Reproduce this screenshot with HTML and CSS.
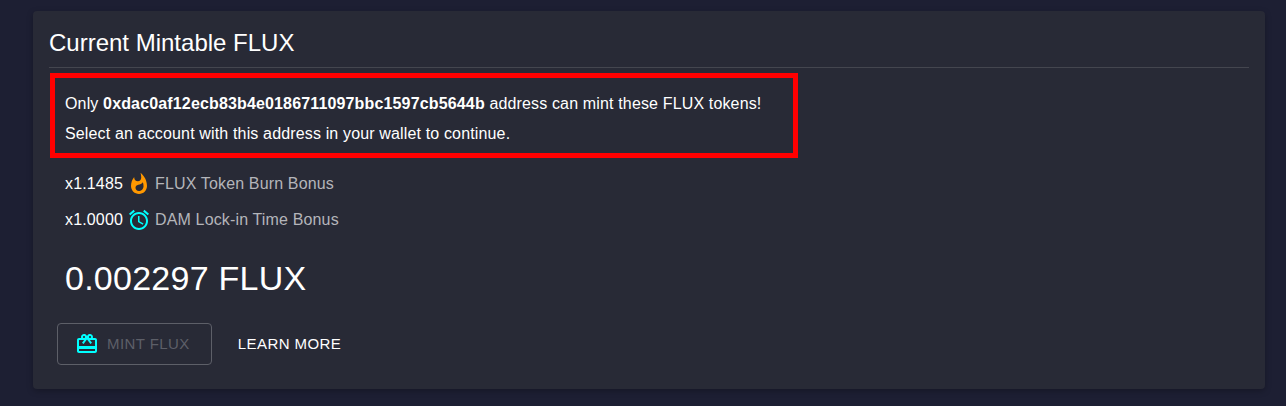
FILE: index.html
```html
<!DOCTYPE html>
<html lang="en">
<head>
    <meta charset="UTF-8">
    <title>Current Mintable FLUX</title>
    <link rel="stylesheet" href="styles.css">
</head>
<body>
    <div class="card">
        <h2 class="card-title">Current Mintable FLUX</h2>
        <div class="notice">
            <p>Only <strong>0xdac0af12ecb83b4e0186711097bbc1597cb5644b</strong> address can mint these FLUX tokens!</p>
            <p>Select an account with this address in your wallet to continue.</p>
        </div>
        <div class="bonus">
            <span class="bonus-value">x1.1485</span>
            <svg class="icon icon-orange" viewBox="0 0 24 24"><path d="M13.5.67s.74 2.65.74 4.8c0 2.06-1.35 3.73-3.41 3.73-2.07 0-3.63-1.67-3.63-3.73l.03-.36C5.21 7.51 4 10.62 4 14c0 4.42 3.58 8 8 8s8-3.58 8-8C20 8.61 17.41 3.8 13.5.67zM11.71 19c-1.78 0-3.22-1.4-3.22-3.14 0-1.62 1.05-2.76 2.81-3.12 1.77-.36 3.6-1.21 4.62-2.58.39 1.29.59 2.65.59 4.04 0 2.65-2.15 4.8-4.8 4.8z"></path></svg>
            <span class="bonus-label">FLUX Token Burn Bonus</span>
        </div>
        <div class="bonus">
            <span class="bonus-value">x1.0000</span>
            <svg class="icon icon-cyan" viewBox="0 0 24 24"><path d="M22 5.72l-4.6-3.86-1.29 1.53 4.6 3.86L22 5.72zM7.88 3.39L6.6 1.86 2 5.71l1.29 1.53 4.59-3.85zM12.5 8H11v6l4.75 2.85.75-1.23-4-2.37V8zM12 4c-4.97 0-9 4.03-9 9s4.03 9 9 9 9-4.03 9-9-4.03-9-9-9zm0 16c-3.87 0-7-3.13-7-7s3.13-7 7-7 7 3.13 7 7-3.13 7-7 7z"></path></svg>
            <span class="bonus-label">DAM Lock-in Time Bonus</span>
        </div>
        <div class="amount">0.002297 FLUX</div>
        <div class="actions">
            <button class="btn btn-outlined" disabled>
                <svg class="icon icon-cyan" viewBox="0 0 24 24"><path d="M20 6h-2.18c.11-.31.18-.65.18-1 0-1.66-1.34-3-3-3-1.05 0-1.96.54-2.5 1.35l-.5.67-.5-.68C10.96 2.54 10.05 2 9 2 7.34 2 6 3.34 6 5c0 .35.07.69.18 1H4c-1.11 0-1.99.89-1.99 2L2 19c0 1.11.89 2 2 2h16c1.11 0 2-.89 2-2V8c0-1.11-.89-2-2-2zm-5-2c.55 0 1 .45 1 1s-.45 1-1 1-1-.45-1-1 .45-1 1-1zM9 4c.55 0 1 .45 1 1s-.45 1-1 1-1-.45-1-1 .45-1 1-1zm11 15H4v-2h16v2zm0-5H4V8h5.08L7 10.83 8.62 12 11 8.76l1-1.36 1 1.36L15.38 12 17 10.83 14.92 8H20v6z"></path></svg>
                <span class="btn-label">MINT FLUX</span>
            </button>
            <button class="btn btn-text"><span class="btn-label">LEARN MORE</span></button>
        </div>
    </div>
</body>
</html>
```

FILE: styles.css
```css
html, body {
    height: 100%;
}
body {
    margin: 0;
    padding: 11px 21px 0 33px;
    box-sizing: border-box;
    overflow: hidden;
    background-color: #1d1f33;
    font-family: "Liberation Sans", Arial, sans-serif;
    color: #fff;
}
.card {
    height: 378px;
    box-sizing: border-box;
    padding: 16px;
    background-color: #282a36;
    border-radius: 4px;
    box-shadow: 0 2px 6px rgba(0, 0, 0, 0.25);
}
.card-title {
    margin: 0;
    height: 41px;
    padding-top: 1px;
    box-sizing: border-box;
    border-bottom: 1px solid #44464f;
    font-size: 24px;
    font-weight: 400;
    line-height: 30px;
}
.notice {
    width: 748px;
    height: 85px;
    box-sizing: border-box;
    margin: 5px 0 8px 1px;
    padding: 11px 10px;
    border: 5px solid #f00;
    font-size: 16px;
    letter-spacing: 0.15px;
}
.notice p {
    margin: 0;
    line-height: 30px;
}
.bonus {
    display: flex;
    align-items: center;
    height: 36px;
    margin-left: 16px;
    font-size: 16px;
    letter-spacing: 0.15px;
}
.bonus-label {
    color: #b4b5ba;
}
.icon {
    width: 24px;
    height: 24px;
    fill: currentColor;
    flex: none;
}
.bonus .icon {
    margin: 0 4px;
}
.icon-orange {
    color: #ff9800;
}
.icon-cyan {
    color: #00ffff;
}
.amount {
    margin: 19px 0 0 16px;
    font-size: 34px;
    line-height: 42px;
    letter-spacing: 0.25px;
}
.actions {
    display: flex;
    align-items: center;
    margin: 24px 0 0 8px;
}
.btn {
    display: flex;
    align-items: center;
    height: 42px;
    box-sizing: border-box;
    border-radius: 4px;
    background: none;
    font-family: inherit;
    font-size: 15px;
    letter-spacing: 0.43px;
}
.btn-label {
    padding-bottom: 2px;
}
.btn-outlined {
    gap: 8px;
    padding: 0 21px 0 17px;
    border: 1px solid #5d5f68;
    color: #5d5f68;
}
.btn-text {
    margin-left: 8px;
    padding: 0 18px;
    border: none;
    color: #fff;
}
```
